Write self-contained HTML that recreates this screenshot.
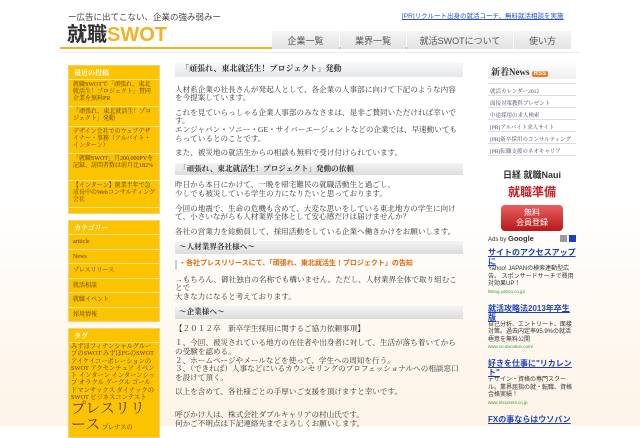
<!DOCTYPE html>
<html><head><meta charset="utf-8"><style>
*{margin:0;padding:0;box-sizing:border-box}
body{width:640px;height:426px;overflow:hidden;background:linear-gradient(#fff 0,#fff 200px,#fdf3e6 426px);font-family:"Liberation Serif","Noto Serif CJK SC",serif;color:#333;position:relative}
.a{position:absolute}
.sans{font-family:"Liberation Sans","Noto Sans CJK JP",sans-serif}
.box{background:#fbc300;border:1px solid #f0d27a;overflow:hidden}
.box h4{color:#fff;font-size:7px;height:14px;line-height:10px;padding:2px 5px;border-bottom:1px solid #fde28a;font-weight:bold}
.box .it{font-size:6px;line-height:7px;color:#5a3a00;padding:2px 4px;border-bottom:1px solid #fde28a;overflow:hidden}
.box .c{font-size:6px;line-height:9px;height:14.5px;color:#5a3a00;padding:3px 4px;border-bottom:1px solid #fde28a}
.m{font-size:7.6px;line-height:8.6px;color:#333}
.bar{background:linear-gradient(#f4f4f4,#dcdcdc);font-weight:bold;font-size:7.6px;padding:2px 4px;color:#333}
.tab{position:absolute;top:31px;height:18px;background:linear-gradient(#f6f6f6,#e2e2e2);font-size:9px;color:#555;text-align:center;line-height:20px}
.rl{font-size:5.5px;color:#446;padding:3px 2px;border-bottom:1px solid #ddd;height:12px}
.ad a{color:#1a3fbf;text-decoration:underline;font-weight:bold;font-size:8px;line-height:9px;display:block}
.ad p{font-size:6px;line-height:7.5px;color:#333}
.ad s{text-decoration:none;color:#3a9a3a;font-size:4.5px;display:block;margin-bottom:10px}
</style></head><body>
<div class="a sans" style="left:68px;top:11px;font-size:8.5px;color:#444">ー広告に出てこない、企業の強み弱みー</div>
<div class="a sans" style="left:67px;top:22px;font-size:20px;font-weight:bold;line-height:26px"><span style="color:#333">就職</span><span style="color:#f5b121">SWOT</span></div>
<div class="a sans" style="left:402px;top:10px;font-size:6.5px;color:#2250c0;text-decoration:underline">[PR]リクルート出身の就活コーチ、無料就活相談を実施</div>
<div class="a" style="left:60px;top:47px;width:440px;height:2px;background:#f5b121"></div>
<div class="tab sans" style="left:272px;width:67px">企業一覧</div>
<div class="tab sans" style="left:340px;width:66px">業界一覧</div>
<div class="tab sans" style="left:407px;width:106px">就活SWOTについて</div>
<div class="tab sans" style="left:514px;width:57px">使い方</div>
<div class="a" style="left:60px;top:52px;width:520px;height:1px;background:#eee"></div>

<div class="a box" style="left:68px;top:65px;width:92px;height:149px">
<h4>最近の投稿</h4>
<div class="it" style="height:27px">就職SWOTで「頑張れ、東北就活生！プロジェクト」賛同企業を無料PR</div>
<div class="it" style="height:20px">「頑張れ、東北就活生！プロジェクト」発動</div>
<div class="it" style="height:27px">デザイン会社でのウェブデザイナー・事務（アルバイト・インターン）</div>
<div class="it" style="height:27px">「就職SWOT」月200,000PVを記録、訪問者数は前月比182%</div>
<div class="it" style="height:27px">【インターン】創業半年で急成長中のWebコンサルティング会社</div>
</div>
<div class="a box" style="left:68px;top:220px;width:92px;height:102px">
<h4>カテゴリー</h4>
<div class="c">ariticle</div>
<div class="c">News</div>
<div class="c">プレスリリース</div>
<div class="c">就活相談</div>
<div class="c">就職イベント</div>
<div class="c">採用情報</div>
</div>
<div class="a box" style="left:68px;top:328px;width:92px;height:110px">
<h4>タグ</h4>
<div style="font-size:6.3px;line-height:7.3px;color:#5a3a00;padding:0 2px">みずほフィナンシャルグループのSWOT みずほFGのSWOT アイケイコーポレーションのSWOT アクセンチュア イベント インターン インターンシップ オラクル グーグル ゴールドマンサックス ダイナックのSWOT ビジネスコンテスト <span style="font-size:15px;line-height:16px">プレスリリース</span> プレナスの</div>
</div>

<div class="a m" style="left:175px;top:62px;width:288px">
<div class="bar" style="font-size:8px;padding:3px 6px;background:linear-gradient(#fafafa,#e4e6ea)">「頑張れ、東北就活生！プロジェクト」発動</div>
<p style="margin-top:9px">人材系企業の社長さんが発起人として、各企業の人事部に向けて下記のような内容を今提案しています。</p>
<p style="margin-top:6px">これを見ていらっしゃる企業人事部のみなさまは、是非ご賛同いただければ幸いです。<br>エンジャパン・ソニー・GE・サイバーエージェントなどの企業では、早速動いてもらっているとのことです。</p>
<p style="margin-top:6px">また、被災地の就活生からの相談も無料で受け付けられています。</p>
<div class="bar" style="margin-top:5px">「頑張れ、東北就活生！プロジェクト」発動の依頼</div>
<p style="margin-top:6px">昨日から本日にかけて、一晩を帰宅難民の就職活動生と過ごし、<br>少しでも被災している学生の力になりたいと思っております。</p>
<p style="margin-top:6px">今回の地震で、生命の危機も含めて、大変な思いをしている東北地方の学生に向けて、小さいながらも人材業界全体として安心感だけは届けませんか？</p>
<p style="margin-top:6px">各社の営業力を総動員して、採用活動をしている企業へ働きかけをお願いします。</p>
<div class="bar" style="margin-top:5px">〜人材業界各社様へ〜</div>
<p class="sans" style="margin-top:6px;color:#e06a10;font-weight:bold;border-left:2px solid #ccc;padding-left:2px;font-size:7px">・各社プレスリリースにて、「頑張れ、東北就活生！プロジェクト」の告知</p>
<p style="margin-top:7px">→もちろん、御社独自の名称でも構いません。ただし、人材業界全体で取り組むことで<br>大きな力になると考えております。</p>
<div class="bar" style="margin-top:5px">〜企業様へ〜</div>
<p style="margin-top:6px">【２０１２卒　新卒学生採用に関するご協力依頼事項】</p>
<p style="margin-top:6px">１、今回、被災されている地方の在住者や出身者に対して、生活が落ち着いてからの受験を認める。<br>２、ホームページやメールなどを使って、学生への周知を行う。<br>３、（できれば）人事などにいるカウンセリングのプロフェッショナルへの相談窓口を設けて頂く。</p>
<p style="margin-top:6px">以上を含めて、各社様ごとの手厚いご支援を頂けますと幸いです。</p>
<p style="margin-top:14px">呼びかけ人は、株式会社ダブルキャリアの村山氏です。<br>何かご不明点は下記連絡先までよろしくお願いします。</p>
</div>

<div class="a" style="left:488px;top:62px;width:88px">
<div style="background:linear-gradient(#fff,#eee);height:17px;font-size:9px;font-weight:bold;padding:3px 3px">新着News <span class="sans" style="background:#f07a20;color:#fff;font-size:6px;padding:0 2px;border-radius:2px">RSS</span></div>
<div style="margin-top:4px;border-top:1px solid #ddd">
<div class="rl">就活カレンダー2012</div><div class="rl">面接対策教科プレゼント</div><div class="rl">中途採用の求人検索</div><div class="rl">[PR]アルバイト求人サイト</div><div class="rl">[PR]新卒採用のコンサルティング</div><div class="rl">[PR]転職支援のネオキャリア</div>
</div>
<div class="sans" style="text-align:center;margin-top:12px;font-size:9px;font-weight:bold;color:#333">日経 就職Naui</div>
<div class="sans" style="text-align:center;margin-top:2px;font-size:12px;font-weight:bold;color:#c8242a">就職準備</div>
<div class="sans" style="margin:5px auto 0;width:62px;height:26px;background:linear-gradient(#e86060,#b81818);border-radius:4px;color:#fff;font-size:8px;line-height:10px;text-align:center;padding-top:3px">無料<br>会員登録</div>
<div class="sans" style="font-size:6px;margin-top:3px;position:relative">Ads by <b style="font-size:7.5px">Google</b><span style="position:absolute;right:0;top:1px;width:7px;height:7px;background:#1a3fbf"></span><span style="position:absolute;right:9px;top:1px;width:7px;height:7px;background:#99a"></span></div>
<div class="ad sans" style="margin-top:5px">
<a>サイトのアクセスアップに</a><p>Yahoo! JAPANの検索連動型広告。 スポンサードサーチで費用対効果UP！</p><s>listing.yahoo.co.jp/</s>
<a>就活攻略法2013年卒生版</a><p>自己分析、エントリート、面接対策。過去内定率95.9%の就活極意を無料公開</p><s>www.co-ducation.com/</s>
<a>好きを仕事に"リカレント"</a><p>デザイン・資格の専門スクール。業界屈指の就・転職、資格合格実績！</p><s>www.recurrent.co.jp</s>
<a>FXの事ならはウソバン</a>
</div>
</div>
</body></html>
